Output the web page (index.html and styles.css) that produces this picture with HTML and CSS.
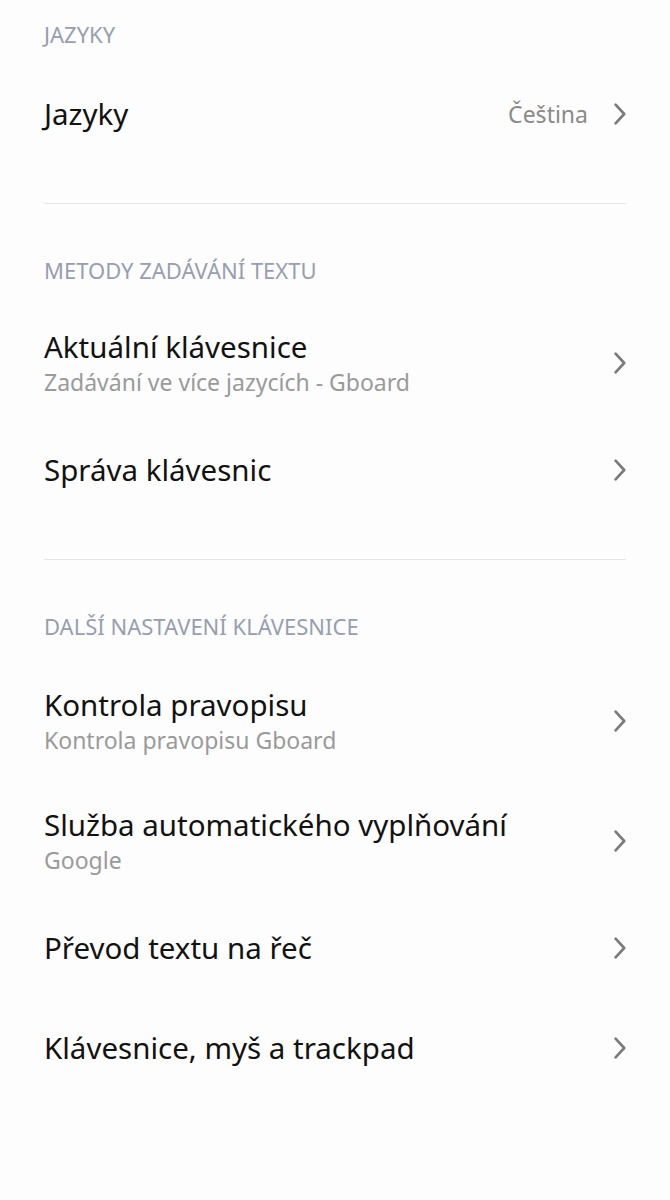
FILE: index.html
```html
<!DOCTYPE html>
<html lang="cs">
<head>
<meta charset="utf-8">
<title>Jazyky a zadávání</title>
<link rel="stylesheet" href="styles.css">
</head>
<body>
<main class="page">
  <section class="group">
    <h2 class="group-title">JAZYKY</h2>
    <a class="row row-single">
      <div class="row-text"><span class="row-title">Jazyky</span></div>
      <span class="row-value">Čeština</span>
      <svg class="chev" viewBox="0 0 12 22" aria-hidden="true"><polyline points="1.6,1.6 10.2,11 1.6,20.4"/></svg>
    </a>
  </section>
  <hr class="divider">
  <section class="group">
    <h2 class="group-title">METODY ZADÁVÁNÍ TEXTU</h2>
    <a class="row row-double">
      <div class="row-text"><span class="row-title">Aktuální klávesnice</span><span class="row-sub">Zadávání ve více jazycích - Gboard</span></div>
      <svg class="chev" viewBox="0 0 12 22" aria-hidden="true"><polyline points="1.6,1.6 10.2,11 1.6,20.4"/></svg>
    </a>
    <a class="row row-single">
      <div class="row-text"><span class="row-title">Správa klávesnic</span></div>
      <svg class="chev" viewBox="0 0 12 22" aria-hidden="true"><polyline points="1.6,1.6 10.2,11 1.6,20.4"/></svg>
    </a>
  </section>
  <hr class="divider">
  <section class="group group-last">
    <h2 class="group-title">DALŠÍ NASTAVENÍ KLÁVESNICE</h2>
    <a class="row row-double">
      <div class="row-text"><span class="row-title">Kontrola pravopisu</span><span class="row-sub">Kontrola pravopisu Gboard</span></div>
      <svg class="chev" viewBox="0 0 12 22" aria-hidden="true"><polyline points="1.6,1.6 10.2,11 1.6,20.4"/></svg>
    </a>
    <a class="row row-double">
      <div class="row-text"><span class="row-title">Služba automatického vyplňování</span><span class="row-sub">Google</span></div>
      <svg class="chev" viewBox="0 0 12 22" aria-hidden="true"><polyline points="1.6,1.6 10.2,11 1.6,20.4"/></svg>
    </a>
    <a class="row row-single">
      <div class="row-text"><span class="row-title">Převod textu na řeč</span></div>
      <svg class="chev" viewBox="0 0 12 22" aria-hidden="true"><polyline points="1.6,1.6 10.2,11 1.6,20.4"/></svg>
    </a>
    <a class="row row-single">
      <div class="row-text"><span class="row-title">Klávesnice, myš a trackpad</span></div>
      <svg class="chev" viewBox="0 0 12 22" aria-hidden="true"><polyline points="1.6,1.6 10.2,11 1.6,20.4"/></svg>
    </a>
  </section>
</main>
</body>
</html>
```
FILE: styles.css
```css
html, body {
  margin: 0;
  padding: 0;
  background: #fdfdfd;
}
body {
  font-family: "Noto Sans", "Open Sans", "DejaVu Sans", sans-serif;
  color: #111;
}
.page {
  display: flex;
  flex-direction: column;
  padding: 0 44px;
}
.group {
  display: flex;
  flex-direction: column;
}
.group-title {
  margin: 0;
  height: 64px;
  padding-top: 20px;
  box-sizing: border-box;
  font-size: 22px;
  line-height: 28px;
  font-weight: 400;
  color: #979eb2;
}
.group-last .group-title {
  height: 66px;
}
.row {
  display: flex;
  align-items: center;
  gap: 26px;
  color: inherit;
  text-decoration: none;
  box-sizing: border-box;
}
.row-single { height: 100px; }
.row-double {
  height: 120px;
  padding-top: 6px;
}
.row-text {
  flex: 1;
  display: flex;
  flex-direction: column;
  min-width: 0;
}
.row-title {
  font-size: 29.5px;
  line-height: 40px;
  color: #121212;
}
.row-double .row-title {
  margin-top: -2px;
}
.row-sub {
  font-size: 23px;
  line-height: 31px;
  color: #9a9a9a;
}
.row-value {
  font-size: 23px;
  line-height: 31px;
  color: #8a8a8a;
}
.chev {
  width: 12px;
  height: 22px;
  flex: none;
  fill: none;
  stroke: #7a7a7a;
  stroke-width: 2.6;
  stroke-linecap: round;
  stroke-linejoin: round;
}
.divider {
  margin: 39px 0 32px;
  border: 0;
  height: 1px;
  background: #e6e6e6;
}
```
